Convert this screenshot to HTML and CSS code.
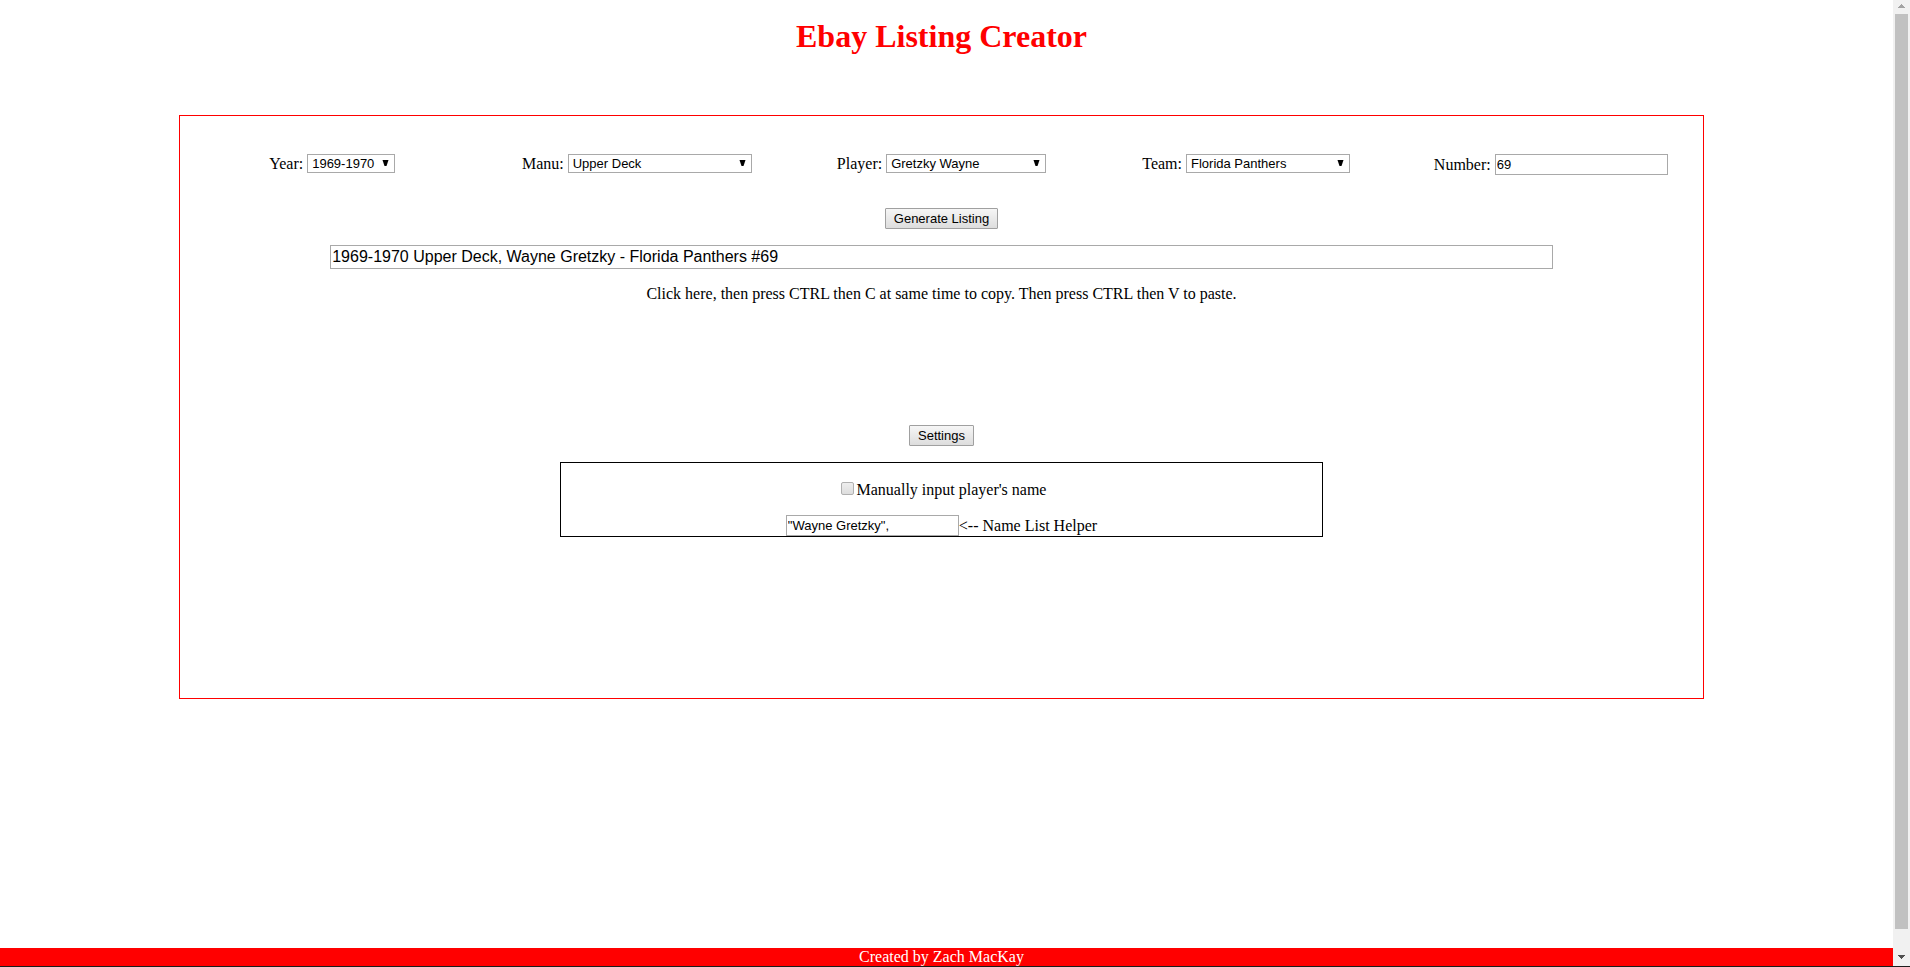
FILE: index.html
```
<!DOCTYPE html>
<html lang="en">
<head>
<meta charset="utf-8">
<title>Ebay Listing Creator</title>
<link rel="stylesheet" href="styles.css">
</head>
<body>
<div class="window">
  <div class="page">
    <main class="content">
      <h1 class="title">Ebay Listing Creator</h1>
      <form class="panel">
        <div class="fields">
          <div class="field">
            <label for="year">Year:</label>
            <span class="picker picker-year"><select id="year"><option>1969-1970</option></select><svg class="arrow" viewBox="0 0 7 7" aria-hidden="true"><path d="M.5 0H6.5L4.5 6H2.5Z"/></svg></span>
          </div>
          <div class="field">
            <label for="manu">Manu:</label>
            <span class="picker picker-manu"><select id="manu"><option>Upper Deck</option></select><svg class="arrow" viewBox="0 0 7 7" aria-hidden="true"><path d="M.5 0H6.5L4.5 6H2.5Z"/></svg></span>
          </div>
          <div class="field">
            <label for="player">Player:</label>
            <span class="picker picker-player"><select id="player"><option>Gretzky Wayne</option></select><svg class="arrow" viewBox="0 0 7 7" aria-hidden="true"><path d="M.5 0H6.5L4.5 6H2.5Z"/></svg></span>
          </div>
          <div class="field">
            <label for="team">Team:</label>
            <span class="picker picker-team"><select id="team"><option>Florida Panthers</option></select><svg class="arrow" viewBox="0 0 7 7" aria-hidden="true"><path d="M.5 0H6.5L4.5 6H2.5Z"/></svg></span>
          </div>
          <div class="field">
            <label for="number">Number:</label>
            <input class="text" id="number" type="text" value="69">
          </div>
        </div>
        <button class="button" type="button">Generate Listing</button>
        <input class="text listing" id="listing" type="text" value="1969-1970 Upper Deck, Wayne Gretzky - Florida Panthers #69">
        <label class="hint" for="listing">Click here, then press CTRL then C at same time to copy. Then press CTRL then V to paste.</label>
        <button class="button" type="button">Settings</button>
        <div class="settings">
          <div class="manual">
            <input class="check" id="manual" type="checkbox"><label for="manual">Manually input player's name</label>
          </div>
          <div class="helper">
            <input class="text" id="helper" type="text" value="&quot;Wayne Gretzky&quot;,"><label for="helper">&lt;-- Name List Helper</label>
          </div>
        </div>
      </form>
    </main>
    <footer class="footer">Created by Zach MacKay</footer>
  </div>
  <div class="scrollbar" aria-hidden="true">
    <svg class="scroll-arrow scroll-up" viewBox="0 0 7 4" shape-rendering="crispEdges"><path d="M3 0H4V1H5V2H6V3H7V4H0V3H1V2H2V1H3Z"/></svg>
    <div class="thumb"></div>
    <svg class="scroll-arrow scroll-down" viewBox="0 0 7 4" shape-rendering="crispEdges"><path d="M0 0H7V1H6V2H5V3H4V4H3V3H2V2H1V1H0Z"/></svg>
  </div>
</div>
</body>
</html>
```
FILE: styles.css
```
* {
  box-sizing: border-box;
}

body {
  margin: 0;
  font: 16px/18px "Liberation Serif", "Times New Roman", serif;
  color: #000;
  background: #fff;
}

.window {
  display: flex;
  height: 100vh;
  border-bottom: 1px solid #1c1c1c;
}

.page {
  flex: 1;
  display: flex;
  flex-direction: column;
}

.content {
  flex: 1;
  display: flex;
  flex-direction: column;
  align-items: center;
  padding-right: 10px;
}

.title {
  margin: 18px 0 60px;
  font-size: 32px;
  line-height: 37px;
  color: #f00;
}

.panel {
  width: 81%;
  display: flex;
  flex-direction: column;
  align-items: center;
  padding: 38px 0 161px;
  border: 1px solid #f00;
}

.fields {
  width: 100%;
  display: grid;
  grid-template-columns: repeat(5, 1fr);
  align-items: start;
  margin-bottom: 33px;
}

.field {
  display: flex;
  justify-content: center;
  align-items: center;
  gap: 4px;
}

.picker {
  position: relative;
  display: flex;
}

.picker-year { width: 88px; }
.picker-manu { width: 184px; }
.picker-player { width: 160px; }
.picker-team { width: 164px; }

.picker select {
  appearance: none;
  width: 100%;
  height: 19px;
  margin: 0;
  padding: 0 4px;
  border: 1px solid #a9a9a9;
  border-radius: 0;
  background: #fff;
  color: #000;
  font: 13px/17px "Liberation Sans", Arial, sans-serif;
}

.arrow {
  position: absolute;
  top: 6px;
  right: 6px;
  width: 7px;
  height: 7px;
  pointer-events: none;
}

.text {
  width: 173px;
  height: 21px;
  margin: 0;
  padding: 1px;
  border: 1px solid #a9a9a9;
  border-radius: 0;
  background: #fff;
  color: #000;
  font: 13px/17px "Liberation Sans", Arial, sans-serif;
}

.button {
  height: 21px;
  margin: 0 0 16px;
  padding: 0 8px;
  border: 1px solid #a0a0a0;
  border-radius: 1px;
  background: linear-gradient(#f6f6f6, #ddd);
  color: #000;
  font: 13px/17px "Liberation Sans", Arial, sans-serif;
}

.listing {
  box-sizing: content-box;
  width: 80%;
  height: 20px;
  margin-bottom: 16px;
  font-size: 16px;
}

.hint {
  margin-bottom: 122px;
}

.settings {
  box-sizing: content-box;
  width: 50%;
  padding-top: 18px;
  border: 1px solid #000;
}

.manual,
.helper {
  display: flex;
  justify-content: center;
  align-items: center;
}

.manual {
  margin-bottom: 16px;
}

.check {
  appearance: none;
  width: 13px;
  height: 13px;
  margin: 0 3px 4px 4px;
  border: 1px solid #b0b0b0;
  border-radius: 2px;
  background: linear-gradient(#eee, #ddd);
}

.footer {
  padding-right: 10px;
  text-align: center;
  color: #fff;
  background: #f00;
}

.scrollbar {
  width: 17px;
  display: flex;
  flex-direction: column;
  align-items: center;
  background: #f1f1f1;
}

.scroll-arrow {
  width: 7px;
  height: 4px;
}

.scroll-up {
  margin: 4px 0 6px;
  fill: #a3a3a3;
}

.scroll-down {
  margin: 26px 0 7px;
  fill: #505050;
}

.thumb {
  flex: 1;
  width: 13px;
  background: #c1c1c1;
}
```
